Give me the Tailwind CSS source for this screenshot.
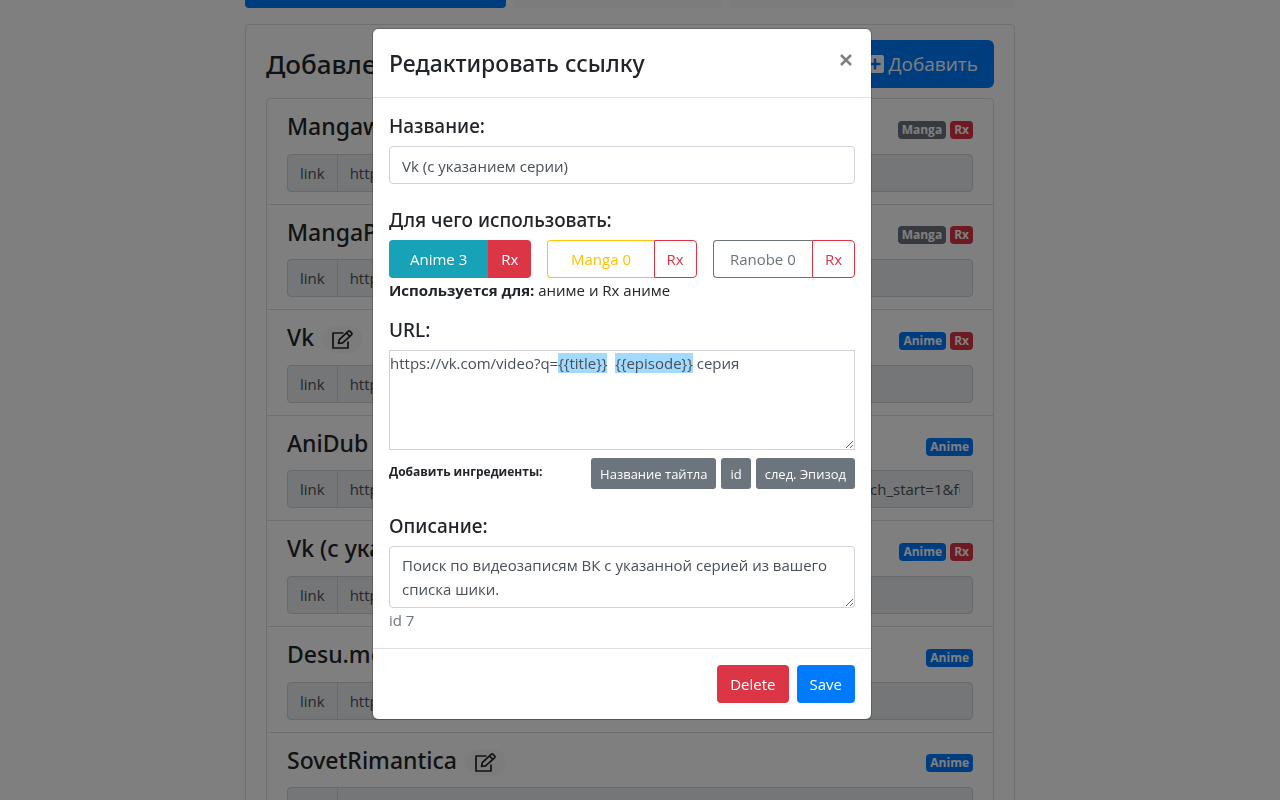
<!DOCTYPE html>
<html lang="ru">

<head>
    <meta charset="UTF-8">
    <meta name="viewport" content="width=device-width, initial-scale=1.0">
    <title>Редактировать ссылку</title>
    <script src="https://cdn.jsdelivr.net/npm/@tailwindcss/browser@4"></script>
</head>

<body class="h-screen overflow-hidden bg-white font-['Open_Sans','Noto_Sans',sans-serif] text-[15px] leading-6 text-[#212529]">
    <svg class="hidden">
        <symbol id="edit" viewBox="0 0 21 19" fill="none" stroke="currentColor" stroke-width="1.700" stroke-linejoin="round">
            <path d="M11.500 3H1v15h15v-6.500" />
            <path d="M6.500 13.500l.8-3.800 8.800-8.400q1-.8 2 .1l1.400 1.400q.9 1 0 2l-8.900 8.100z" />
            <path d="M14.500 3l3.400 3.400" />
        </symbol>
    </svg>

    <!-- Page -->
    <div class="pr-5">
        <main class="mx-auto max-w-[770px]">
            <div class="grid h-2 grid-cols-[261fr_208fr_285fr] gap-2">
                <div class="rounded-b bg-[#007bff]"></div>
                <div class="rounded-b bg-[#f8f9fa]"></div>
                <div class="rounded-b bg-[#f8f9fa]"></div>
            </div>

            <section class="mt-4 rounded border border-[#dfdfdf] px-5 py-[15px]">
                <div class="mb-2.5 flex items-center justify-between">
                    <h2 class="font-['Noto_Sans'] text-[26px] font-medium leading-8">Добавленные ссылки</h2>
                    <button class="flex h-12 items-center gap-1 rounded-md bg-[#007bff] px-4 text-[19px] text-white">
                        <svg class="size-5" viewBox="0 0 20 20">
                            <rect x="1" y="1" width="18" height="18" rx="2" fill="currentColor" />
                            <path d="M10 4.500v11M4.500 10h11" stroke="#007bff" stroke-width="2.500" />
                        </svg>
                        Добавить
                    </button>
                </div>

                <ul class="divide-y divide-[#dfdfdf] rounded border border-[#dfdfdf]">
                    <li class="px-5 py-3">
                        <div class="mb-[9px] flex items-center pt-0.5">
                            <h4 class="pb-1 font-['Noto_Sans'] text-[23px] font-medium leading-[1.2]">Mangaworld</h4>
                            <div class="ml-auto mt-0.5 flex gap-1 text-xs font-bold leading-[18px] text-white">
                                <span class="rounded bg-[#6c757d] px-1">Manga</span>
                                <span class="rounded bg-[#dc3545] px-1">Rx</span>
                            </div>
                        </div>
                        <div class="flex h-[38px] rounded border border-[#ced4da] bg-[#e9ecef] text-[#495057]">
                            <label for="link1" class="border-r border-[#ced4da] px-3 leading-9">link</label>
                            <input id="link1" class="min-w-0 flex-1 px-3" value="https://mangaworld.ru/search" readonly>
                        </div>
                    </li>
                    <li class="px-5 py-3">
                        <div class="mb-[9px] flex items-center pt-0.5">
                            <h4 class="pb-1 font-['Noto_Sans'] text-[23px] font-medium leading-[1.2]">MangaPoisk</h4>
                            <div class="ml-auto mt-0.5 flex gap-1 text-xs font-bold leading-[18px] text-white">
                                <span class="rounded bg-[#6c757d] px-1">Manga</span>
                                <span class="rounded bg-[#dc3545] px-1">Rx</span>
                            </div>
                        </div>
                        <div class="flex h-[38px] rounded border border-[#ced4da] bg-[#e9ecef] text-[#495057]">
                            <label for="link2" class="border-r border-[#ced4da] px-3 leading-9">link</label>
                            <input id="link2" class="min-w-0 flex-1 px-3" value="https://mangapoisk.ru/search" readonly>
                        </div>
                    </li>
                    <li class="px-5 py-3">
                        <div class="mb-[9px] flex items-center pt-0.5">
                            <h4 class="pb-1 font-['Noto_Sans'] text-[23px] font-medium leading-[1.2]">Vk</h4>
                            <button aria-label="Редактировать" class="ml-2 rounded-full bg-[#f8f9fa] px-2.5 py-1">
                                <svg class="h-[19px] w-[21px]"><use href="#edit" /></svg>
                            </button>
                            <div class="ml-auto mt-0.5 flex gap-1 text-xs font-bold leading-[18px] text-white">
                                <span class="rounded bg-[#007bff] px-1">Anime</span>
                                <span class="rounded bg-[#dc3545] px-1">Rx</span>
                            </div>
                        </div>
                        <div class="flex h-[38px] rounded border border-[#ced4da] bg-[#e9ecef] text-[#495057]">
                            <label for="link3" class="border-r border-[#ced4da] px-3 leading-9">link</label>
                            <input id="link3" class="min-w-0 flex-1 px-3" value="https://vk.com/video?q={{title}}" readonly>
                        </div>
                    </li>
                    <li class="px-5 py-3">
                        <div class="mb-[9px] flex items-center pt-0.5">
                            <h4 class="pb-1 font-['Noto_Sans'] text-[23px] font-medium leading-[1.2]">AniDub</h4>
                            <div class="ml-auto mt-0.5 flex gap-1 text-xs font-bold leading-[18px] text-white">
                                <span class="rounded bg-[#007bff] px-1">Anime</span>
                            </div>
                        </div>
                        <div class="flex h-[38px] rounded border border-[#ced4da] bg-[#e9ecef] text-[#495057]">
                            <label for="link4" class="border-r border-[#ced4da] px-3 leading-9">link</label>
                            <input id="link4" class="min-w-0 flex-1 px-3" value="https://online2.anidub.com/index.php?do=search&amp;subaction=search&amp;search_start=1&amp;full_search=0" readonly>
                        </div>
                    </li>
                    <li class="px-5 py-3">
                        <div class="mb-[9px] flex items-center pt-0.5">
                            <h4 class="pb-1 font-['Noto_Sans'] text-[23px] font-medium leading-[1.2]">Vk (с указанием серии)</h4>
                            <div class="ml-auto mt-0.5 flex gap-1 text-xs font-bold leading-[18px] text-white">
                                <span class="rounded bg-[#007bff] px-1">Anime</span>
                                <span class="rounded bg-[#dc3545] px-1">Rx</span>
                            </div>
                        </div>
                        <div class="flex h-[38px] rounded border border-[#ced4da] bg-[#e9ecef] text-[#495057]">
                            <label for="link5" class="border-r border-[#ced4da] px-3 leading-9">link</label>
                            <input id="link5" class="min-w-0 flex-1 px-3" value="https://vk.com/video?q={{title}}" readonly>
                        </div>
                    </li>
                    <li class="px-5 py-3">
                        <div class="mb-[9px] flex items-center pt-0.5">
                            <h4 class="pb-1 font-['Noto_Sans'] text-[23px] font-medium leading-[1.2]">Desu.me</h4>
                            <div class="ml-auto mt-0.5 flex gap-1 text-xs font-bold leading-[18px] text-white">
                                <span class="rounded bg-[#007bff] px-1">Anime</span>
                            </div>
                        </div>
                        <div class="flex h-[38px] rounded border border-[#ced4da] bg-[#e9ecef] text-[#495057]">
                            <label for="link6" class="border-r border-[#ced4da] px-3 leading-9">link</label>
                            <input id="link6" class="min-w-0 flex-1 px-3" value="https://desu.me/search" readonly>
                        </div>
                    </li>
                    <li class="px-5 py-3">
                        <div class="mb-[9px] flex items-center pt-0.5">
                            <h4 class="pb-1 font-['Noto_Sans'] text-[23px] font-medium leading-[1.2]">SovetRimantica</h4>
                            <button aria-label="Редактировать" class="ml-2 rounded-full bg-[#f8f9fa] px-2.5 py-1">
                                <svg class="h-[19px] w-[21px]"><use href="#edit" /></svg>
                            </button>
                            <div class="ml-auto mt-0.5 flex gap-1 text-xs font-bold leading-[18px] text-white">
                                <span class="rounded bg-[#007bff] px-1">Anime</span>
                            </div>
                        </div>
                        <div class="flex h-[38px] rounded border border-[#ced4da] bg-[#e9ecef] text-[#495057]">
                            <label for="link7" class="border-r border-[#ced4da] px-3 leading-9">link</label>
                            <input id="link7" class="min-w-0 flex-1 px-3" value="https://sovetromantica.com/anime" readonly>
                        </div>
                    </li>
                </ul>
            </section>
        </main>
    </div>

    <!-- Modal -->
    <div class="fixed inset-0 bg-black/50 pr-9 pt-7">
        <div role="dialog" aria-labelledby="modal-title" class="mx-auto max-w-[500px] rounded-md border border-black/20 bg-white bg-clip-padding">
            <div class="flex items-start justify-between border-b border-[#dee2e6] p-4">
                <h4 id="modal-title" class="font-['Noto_Sans'] text-[23px] font-medium leading-9">Редактировать ссылку</h4>
                <button aria-label="Закрыть" class="py-[3px] text-[#7f7f7f]">
                    <svg class="size-[18px]" viewBox="0 0 18 18" fill="none" stroke="currentColor" stroke-width="2.500">
                        <path d="M4 7l10 10M14 7L4 17" />
                    </svg>
                </button>
            </div>

            <form class="p-4">
                <div class="mb-6">
                    <label for="title" class="mb-2 block font-['Noto_Sans'] text-[19px] font-medium">Название:</label>
                    <input id="title" class="block h-[38px] w-full rounded border border-[#ced4da] px-3 pt-0.5 text-[#495057]" value="Vk (с указанием серии)">
                </div>

                <div class="mb-4">
                    <h5 class="mb-2 font-['Noto_Sans'] text-[19px] font-medium">Для чего использовать:</h5>
                    <div class="grid grid-cols-[142fr_149fr_142fr] gap-4">
                        <div class="flex h-[38px]">
                            <button type="button" class="flex-1 rounded-l bg-[#17a2b8] text-white">Anime 3</button>
                            <button type="button" class="w-[43px] rounded-r bg-[#dc3545] text-white">Rx</button>
                        </div>
                        <div class="flex h-[38px]">
                            <button type="button" class="flex-1 rounded-l border border-r-0 border-[#ffc107] text-[#ffc107]">Manga 0</button>
                            <button type="button" class="w-[43px] rounded-r border border-[#dc3545] text-[#dc3545]">Rx</button>
                        </div>
                        <div class="flex h-[38px]">
                            <button type="button" class="flex-1 rounded-l border border-r-0 border-[#6c757d] text-[#6c757d]">Ranobe 0</button>
                            <button type="button" class="w-[43px] rounded-r border border-[#dc3545] text-[#dc3545]">Rx</button>
                        </div>
                    </div>
                    <p><b>Используется для:</b> аниме и Rx аниме</p>
                </div>

                <div class="mb-6">
                    <label for="url" class="mb-2 block font-['Noto_Sans'] text-[19px] font-medium">URL:</label>
                    <!-- the marks lie under the transparent textarea -->
                    <div class="relative h-[100px]">
                        <div aria-hidden="true" class="absolute inset-0 whitespace-pre-wrap border border-transparent text-transparent">https://vk.com/video?q=<mark class="bg-[#a3daff] text-transparent">{{title}}</mark>  <mark class="bg-[#a3daff] text-transparent">{{episode}}</mark></div>
                        <textarea id="url" class="relative block size-full border border-[#ced4da] text-[#495057]">https://vk.com/video?q={{title}}  {{episode}} серия</textarea>
                    </div>
                    <div class="mt-2 flex h-8 justify-between">
                        <b class="text-xs leading-7">Добавить ингредиенты:</b>
                        <div class="flex gap-[5px] text-[13px] text-white">
                            <button type="button" class="h-[31px] rounded-[3px] bg-[#6c757d] px-[9px]">Название тайтла</button>
                            <button type="button" class="h-[31px] rounded-[3px] bg-[#6c757d] px-[9px]">id</button>
                            <button type="button" class="h-[31px] rounded-[3px] bg-[#6c757d] px-[9px]">след. Эпизод</button>
                        </div>
                    </div>
                </div>

                <label for="description" class="mb-2 block font-['Noto_Sans'] text-[19px] font-medium">Описание:</label>
                <textarea id="description" class="block h-[62px] w-full rounded border border-[#ced4da] px-3 py-1.5 text-[#495057]">Поиск по видеозаписям ВК с указанной серией из вашего списка шики.</textarea>
                <p class="text-[#6c757d]">id 7</p>
            </form>

            <div class="flex justify-end gap-2 border-t border-[#dee2e6] p-4 text-white">
                <button class="h-[38px] rounded bg-[#dc3545] px-[13px]">Delete</button>
                <button class="h-[38px] rounded bg-[#007bff] px-[13px]">Save</button>
            </div>
        </div>
    </div>
</body>

</html>
